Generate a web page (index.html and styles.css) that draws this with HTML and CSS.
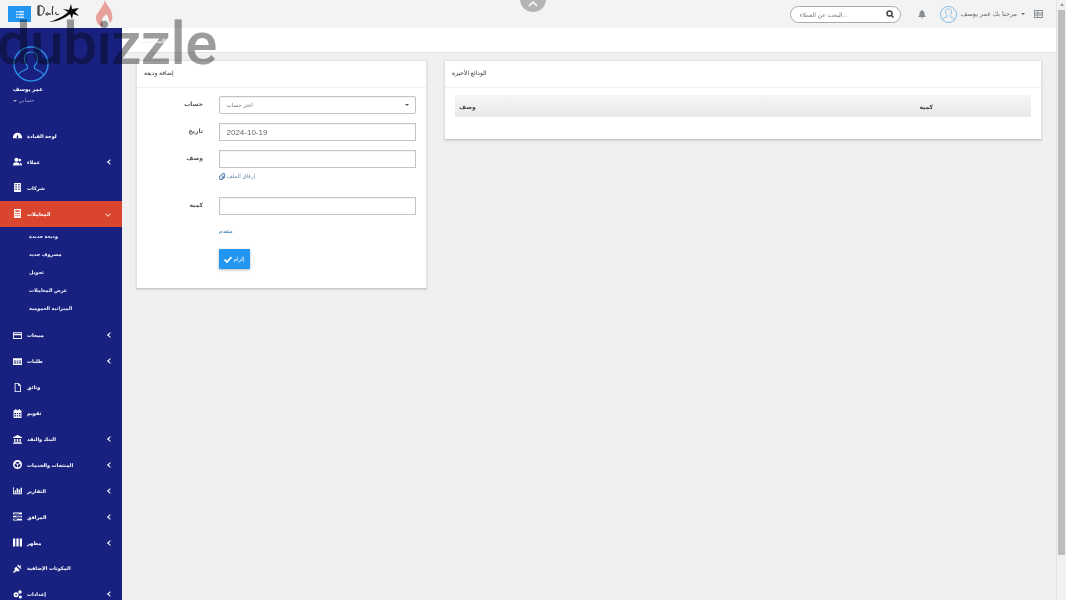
FILE: index.html
```html
<!DOCTYPE html>
<html lang="ar">

<head>
  <meta charset="UTF-8">
  <title>إضافة وديعة</title>
  <link rel="stylesheet" href="styles.css">
</head>

<body>
  <svg class="sprite" width="0" height="0">
    <symbol id="i-dash" viewBox="0 0 16 16"><path d="M8 3a8 8 0 0 0-8 8v2h16v-2a8 8 0 0 0-8-8zm0 3 1.500 4.500a1.600 1.600 0 1 1-3 0z" fill-rule="evenodd"/></symbol>
    <symbol id="i-users" viewBox="0 0 16 16"><circle cx="6" cy="5" r="3.500"/><path d="M0 15c0-4 2-5.500 6-5.500s6 1.500 6 5.500z"/><circle cx="12" cy="5.500" r="2.500"/><path d="M13 15h3c0-3-1-4.500-4-4.800 1 1.200 1 3 1 4.800z"/></symbol>
    <symbol id="i-building" viewBox="0 0 16 16"><path d="M2 0h12v16H2zm2 2v2h3V2zm5 0v2h3V2zM4 6v2h3V6zm5 0v2h3V6zm-5 4v2h3v-2zm5 0v2h3v-2z" fill-rule="evenodd"/></symbol>
    <symbol id="i-calc" viewBox="0 0 16 16"><path d="M2 0h12v16H2zm2 2v3h8V2zm0 5v2h2V7zm3 0v2h2V7zm3 0v2h2V7zm-6 4v2h2v-2zm3 0v2h2v-2zm3 0v2h2v-2z" fill-rule="evenodd"/></symbol>
    <symbol id="i-card" viewBox="0 0 16 16"><path d="M0 2h16v12H0zm1.500 1.500V5h13V3.500zm0 4V12.500h13V7.500z" fill-rule="evenodd"/></symbol>
    <symbol id="i-table" viewBox="0 0 16 16"><path d="M0 2h16v12H0zm1.500 4v2H5V6zm5 0v2h3V6zm4.500 0v2h3.500V6zm-9.500 3.500v2H5v-2zm5 0v2h3v-2zm4.500 0v2h3.500v-2z" fill-rule="evenodd"/></symbol>
    <symbol id="i-file" viewBox="0 0 16 16"><path d="M3 0h7l4 4v12H3zm1.500 1.500v13h8V5H9V1.500z" fill-rule="evenodd"/></symbol>
    <symbol id="i-cal" viewBox="0 0 16 16"><path d="M1 2h3V0h2v2h4V0h2v2h3v14H1zm1.500 5v2.500h3V7zm4.500 0v2.500h2V7zm3.500 0v2.500h3V7zm-8 4v2.500h3V11zm4.500 0v2.500h2V11zm3.500 0v2.500h3V11z" fill-rule="evenodd"/></symbol>
    <symbol id="i-bank" viewBox="0 0 16 16"><path d="M8 0l8 4v1.500H0V4zM2 7h2.500v5H2zm4.700 0h2.600v5H6.700zM11.500 7H14v5h-2.500zM1 13h14v1H1zM0 14.500h16V16H0z"/></symbol>
    <symbol id="i-cube" viewBox="0 0 16 16"><path d="M8 0a8 8 0 1 0 0 16A8 8 0 0 0 8 0zM3.500 5 8 3l4.500 2L8 7zM3 6.500l4.300 1.800v5L3 11zm10 0V11l-4.300 2.300v-5z" fill-rule="evenodd"/></symbol>
    <symbol id="i-chart" viewBox="0 0 16 16"><path d="M0 2h1.500v11H16v1.500H0zM3 8h2.500v4H3zm3.500-4H9v8H6.500zM10 6h2.500v6H10zm3.500-3H16v9h-2.500z"/></symbol>
    <symbol id="i-tasks" viewBox="0 0 16 16"><path d="M0 1h16v3H0zm1.500 1v1H10V2zM0 6.500h16v3H0zM5 7.500v1h9.500v-1zM0 12h16v3H0zm1.500 1v1H7v-1z" fill-rule="evenodd"/></symbol>
    <symbol id="i-columns" viewBox="0 0 16 16"><path d="M0 1h4v14H0zm6 0h4v14H6zm6 0h4v14h-4z"/></symbol>
    <symbol id="i-plug" viewBox="0 0 16 16"><path d="M9 1l3 3 2-2 1 1-2 2 2 3-2 .5-5.500-5.500zM6 5l6 6c-2 2.500-4.500 3-6.500 1.500L2 16 0 14l3.500-3.500C2 8.500 3 7 6 5z"/></symbol>
    <symbol id="i-cogs" viewBox="0 0 16 16"><path d="M5.500 4a4.500 4.500 0 1 0 0 9 4.500 4.500 0 0 0 0-9zm0 3a1.500 1.500 0 1 1 0 3 1.500 1.500 0 0 1 0-3z" fill-rule="evenodd"/><circle cx="12.500" cy="3.500" r="3"/><circle cx="13" cy="12.500" r="2.800"/></symbol>
    <symbol id="i-person" viewBox="0 0 36 36"><circle cx="18" cy="18" r="17" fill="none" stroke="currentColor" stroke-width="1.400"/><path d="M5.500 29c1-4 6.500-4.500 9-6.500v-2.800c-1.800-1.500-3-4.200-3-7.200 0-4 2.500-6.500 6.500-6.500s6.500 2.500 6.500 6.500c0 3-1.200 5.700-3 7.200v2.800c2.500 2 8 2.500 9 6.500" fill="none" stroke="currentColor" stroke-width="1.200"/></symbol>
  </svg>

  <div class="shell">
    <div class="screen">
      <header class="topbar">
        <div class="brand">
          <button class="menu-btn" type="button">
            <svg width="8" height="7" viewBox="0 0 10 9" fill="#d8ecfc"><path d="M0 0h2v2H0zm3 0h7v2H3zM0 3.500h2v2H0zm3 0h7v2H3zM0 7h2v2H0zm3 0h7v2H3z"/></svg>
          </button>
          <svg class="logo" width="43" height="22" viewBox="0 0 43 22">
            <path d="M1 3c4-1 7 1 6 5s-4 5-6 4zM2 3v9M11 10c-2-1-3 2-1 2s2-2 2-2 0 2 2 1M16 3c-1 3-1 7 0 9M19 9c-1 3 1 3 3 2" fill="none" stroke="#111" stroke-width="1"/>
            <path d="M12 19c7-2 15-6 19-10l-5-3 6 1 2-6 1 5 7-1-4 4 4 4-6-2-1 5-2-5c-5 4-13 8-21 8z" fill="#0a0a0a"/>
          </svg>
          <svg class="flame" width="20" height="28" viewBox="0 0 20 28">
            <path d="M10 0c1 5 6 8 7 14 1 4 0 7-2 9l-1-2c0-3-1-5-3-7-1 2-4 3-4 7 0 1 0 2 1 3 0 1-1 2-1 3-4-2-6-5-6-9 0-4 3-6 5-10 2-2 3-5 4-8z" fill="#e8a09a"/>
          </svg>
        </div>
        <div class="top-tools">
          <div class="search">
            <svg width="8" height="8" viewBox="0 0 16 16"><circle cx="7" cy="7" r="5" fill="none" stroke="#444" stroke-width="3"/><path d="M10.500 10.500 15 15" stroke="#444" stroke-width="3"/></svg>
            <span class="search-text">البحث عن العملاء...</span>
          </div>
          <svg class="bell" width="8" height="9" viewBox="0 0 16 18"><path d="M8 0c1 0 1.500.7 1.500 1.500C12 2.300 13 4.500 13 7c0 4 1 5 3 7H0c2-2 3-3 3-7 0-2.500 1-4.700 3.500-5.500C6.500.7 7 0 8 0zM6 15h4a2 2 0 0 1-4 0z" fill="#8a8f94"/></svg>
          <svg class="top-avatar" width="17" height="17"><use href="#i-person"/></svg>
          <span class="welcome">مرحبا بك عمر يوسف</span>
          <span class="caret"></span>
          <svg width="9" height="8" viewBox="0 0 16 14" fill="#8a8f94"><path d="M0 0h16v14H0zm1.500 1.500v3H6v-3zm6 0v3h7v-3zm-6 4.500v2H6V6zm6 0v2h7V6zm-6 3.500v3H6v-3zm6 0v3h7v-3z" fill-rule="evenodd"/></svg>
        </div>
      </header>

      <div class="body-row">
        <aside class="sidebar">
          <div class="profile">
            <svg class="avatar" width="36" height="36"><use href="#i-person"/></svg>
            <div class="profile-name">عمر يوسف</div>
            <div class="profile-role"><span class="caret light"></span> حسابي</div>
          </div>
          <nav class="nav">
            <a class="nav-item"><svg><use href="#i-dash"/></svg><span>لوحة القيادة</span></a>
            <a class="nav-item more"><svg><use href="#i-users"/></svg><span>عملاء</span></a>
            <a class="nav-item"><svg><use href="#i-building"/></svg><span>شركات</span></a>
            <a class="nav-item more open active"><svg><use href="#i-calc"/></svg><span>المعاملات</span></a>
            <div class="subnav">
              <a>وديعة جديدة</a>
              <a>مصروف جديد</a>
              <a>تحويل</a>
              <a>عرض المعاملات</a>
              <a>الميزانية العمومية</a>
            </div>
            <a class="nav-item more"><svg><use href="#i-card"/></svg><span>مبيعات</span></a>
            <a class="nav-item more"><svg><use href="#i-table"/></svg><span>طلبات</span></a>
            <a class="nav-item"><svg><use href="#i-file"/></svg><span>وثائق</span></a>
            <a class="nav-item"><svg><use href="#i-cal"/></svg><span>تقويم</span></a>
            <a class="nav-item more"><svg><use href="#i-bank"/></svg><span>البنك والنقد</span></a>
            <a class="nav-item more"><svg><use href="#i-cube"/></svg><span>المنتجات والخدمات</span></a>
            <a class="nav-item more"><svg><use href="#i-chart"/></svg><span>التقارير</span></a>
            <a class="nav-item more"><svg><use href="#i-tasks"/></svg><span>المرافق</span></a>
            <a class="nav-item more"><svg><use href="#i-columns"/></svg><span>مظهر</span></a>
            <a class="nav-item"><svg><use href="#i-plug"/></svg><span>المكونات الإضافية</span></a>
            <a class="nav-item more"><svg><use href="#i-cogs"/></svg><span>إعدادات</span></a>
          </nav>
        </aside>

        <main class="content">
          <div class="page-head"><span class="page-title">المعاملات</span></div>
          <div class="cards">
            <section class="card card-form">
              <h2 class="card-title">إضافة وديعة</h2>
              <form class="form">
                <div class="row">
                  <label>حساب</label>
                  <div class="field select">اختر حساب<span class="caret dark"></span></div>
                </div>
                <div class="row">
                  <label>تاريخ</label>
                  <input class="field" type="text" value="2024-10-19">
                </div>
                <div class="row row-desc">
                  <label>وصف</label>
                  <div class="col">
                    <input class="field" type="text">
                    <a class="attach">
                      <svg width="7" height="7" viewBox="0 0 16 16"><path d="M14 8 8 14a4 4 0 0 1-6-6l6-6a2.800 2.800 0 0 1 4 4L6 12" fill="none" stroke="#5f86b5" stroke-width="2.500"/></svg>
                      إرفاق الملف
                    </a>
                  </div>
                </div>
                <div class="row">
                  <label>كمية</label>
                  <input class="field" type="text">
                </div>
                <a class="advanced">متقدم</a>
                <button class="save" type="button">
                  <svg width="8" height="7" viewBox="0 0 16 14"><path d="M1 7l5 5L15 2" fill="none" stroke="#fff" stroke-width="3.500"/></svg>
                  إلزام
                </button>
              </form>
            </section>

            <section class="card card-list">
              <h2 class="card-title">الودائع الأخيرة</h2>
              <div class="table-wrap">
                <div class="table-head">
                  <span class="col-desc">وصف</span>
                  <span class="col-qty">كمية</span>
                </div>
              </div>
            </section>
          </div>
        </main>
      </div>
    </div>

    <div class="scrollbar">
      <div class="scroll-up"></div>
      <div class="scroll-thumb"></div>
    </div>
  </div>

  <div class="watermark">dubizzle</div>
  <div class="gallery-btn">
    <svg width="10" height="6" viewBox="0 0 10 6"><path d="M1 5l4-4 4 4" fill="none" stroke="#fff" stroke-width="1.500"/></svg>
  </div>
</body>

</html>
```

FILE: styles.css
```css
* {
  box-sizing: border-box;
}

html,
body {
  margin: 0;
  height: 600px;
  overflow: hidden;
}

body {
  font-family: "Liberation Sans", "DejaVu Sans", "Noto Sans", sans-serif;
  font-size: 7px;
  color: #333;
  background: #f0f0f0;
}

.sprite {
  display: none;
}

.shell {
  display: flex;
  height: 600px;
}

.screen {
  flex: 1;
  min-width: 0;
  display: flex;
  flex-direction: column;
}

/* top bar */
.topbar {
  height: 28px;
  flex: none;
  display: flex;
  justify-content: space-between;
  align-items: center;
  background: #f3f3f4;
  overflow: hidden;
}

.brand {
  display: flex;
  align-items: center;
  padding-left: 8px;
}

.menu-btn {
  width: 23px;
  height: 16px;
  padding: 0;
  border: 0;
  background: #2196f3;
  display: flex;
  align-items: center;
  justify-content: center;
}

.logo {
  margin-left: 6px;
}

.flame {
  margin-left: 15px;
}

.top-tools {
  display: flex;
  align-items: center;
  padding-right: 13px;
}

.search {
  width: 111px;
  height: 17px;
  display: flex;
  justify-content: space-between;
  align-items: center;
  flex-direction: row-reverse;
  padding: 0 6px 0 9px;
  border: 1px solid #aaa;
  border-radius: 9px;
  background: #fff;
}

.search-text {
  font-size: 6px;
  color: #777;
}

.bell {
  margin-left: 17px;
}

.top-avatar {
  margin-left: 14px;
  color: #4aa3df;
}

.welcome {
  margin-left: 4px;
  font-size: 6.500px;
  color: #666;
}

.caret {
  display: inline-block;
  border: 2px solid transparent;
  border-top: 2.500px solid #666;
  border-bottom: 0;
  margin: 0 9px 0 4px;
}

.caret.light {
  border-top-color: #aab;
  margin: 0;
  vertical-align: middle;
}

.caret.dark {
  border-top-color: #555;
  margin: 0;
}

/* side menu */
.body-row {
  flex: 1;
  min-height: 0;
  display: flex;
}

.sidebar {
  width: 122px;
  flex: none;
  background: #18217f;
  color: #fff;
  overflow: hidden;
}

.profile {
  height: 95px;
  padding: 18px 0 0 13px;
}

.avatar {
  display: block;
  margin: 0 0 3px;
  color: #2b8fe8;
}

.profile-name {
  width: 30px;
  text-align: center;
  font-size: 5.500px;
  font-weight: bold;
  line-height: 9px;
}

.profile-role {
  margin-top: 2px;
  font-size: 5.500px;
  color: #9aa0d0;
  line-height: 9px;
}

.nav-item {
  height: 25.900px;
  display: flex;
  align-items: center;
  padding-left: 13px;
  font-size: 5px;
  font-weight: bold;
  color: #fff;
}

.nav-item svg {
  width: 9px;
  height: 9px;
  margin-right: 5px;
  fill: #fff;
}

.nav-item.more::after {
  content: "";
  margin-left: auto;
  margin-right: 10px;
  width: 3px;
  height: 3px;
  border-top: 1px solid #fff;
  border-left: 1px solid #fff;
  transform: rotate(-45deg);
}

.nav-item.open::after {
  transform: rotate(225deg);
  border-color: #f3c3b8;
  margin-right: 12px;
}

.nav-item.active {
  background: #d9452f;
}

.subnav {
  display: flex;
  flex-direction: column;
  padding: 0 0 5px 29px;
}

.subnav a {
  height: 18.200px;
  display: flex;
  align-items: center;
  font-size: 5px;
  font-weight: bold;
  color: #eef;
}

/* content */
.content {
  flex: 1;
  min-width: 0;
}

.page-head {
  height: 25px;
  padding: 9px 0 0 18px;
  background: #fff;
  border-bottom: 1px solid #e6e6e6;
}

/* sits on top of the watermark */
.page-title {
  position: relative;
  z-index: 2;
  font-size: 5.500px;
  font-weight: bold;
  color: #f4f4f4;
}

.cards {
  display: flex;
  align-items: flex-start;
  gap: 17px;
  padding: 7px 14px 0;
}

.card {
  background: #fff;
  border: 1px solid #e3e3e3;
  border-bottom-color: #c8c8c8;
  box-shadow: 0 1px 2px rgba(0, 0, 0, .12);
}

.card-form {
  width: 291px;
  height: 229px;
}

.card-list {
  flex: 1;
  height: 80px;
}

.card-title {
  height: 27px;
  margin: 0;
  padding: 7px 7px 0;
  font-size: 6px;
  font-weight: normal;
  line-height: 10px;
  border-bottom: 1px solid #f0f0f0;
}

.form {
  padding: 8px 10px 0 0;
}

.row {
  display: flex;
  align-items: flex-start;
  margin-bottom: 9px;
}

.row-desc {
  margin-bottom: 17px;
}

.row label {
  width: 66px;
  padding-top: 4px;
  margin-right: 16px;
  text-align: right;
  font-size: 6px;
  font-weight: bold;
  color: #555;
}

.col {
  display: flex;
  flex-direction: column;
}

.field {
  width: 197px;
  height: 18px;
  padding: 0 6.500px;
  border: 1px solid #c4c4c4;
  background: #fff;
  font-family: inherit;
  font-size: 8px;
  color: #666;
  box-shadow: inset 0 1px 1px rgba(0, 0, 0, .04);
}

.select {
  display: flex;
  justify-content: space-between;
  align-items: center;
  font-size: 5.500px;
  color: #777;
  border-radius: 2px;
}

.attach {
  display: flex;
  align-items: center;
  gap: 1px;
  margin-top: 4px;
  font-size: 5.500px;
  line-height: 8px;
  color: #6f8fb5;
}

.advanced {
  display: block;
  margin: 12px 0 0 82px;
  font-size: 5.500px;
  line-height: 9px;
  color: #1f6fa8;
}

.save {
  display: flex;
  align-items: center;
  justify-content: center;
  gap: 1px;
  width: 31px;
  height: 20px;
  margin: 13px 0 0 82px;
  padding: 0;
  border: 0;
  border-radius: 1px;
  background: #2196f3;
  box-shadow: 0 1px 3px rgba(0, 0, 0, .3);
  color: #fff;
  font-family: inherit;
  font-size: 5.500px;
}

.table-wrap {
  padding: 7px 10px;
}

.table-head {
  height: 22px;
  display: flex;
  justify-content: space-between;
  align-items: center;
  padding: 0 98px 0 4px;
  background: linear-gradient(#f6f6f7, #e9e9ec);
  font-size: 6px;
  font-weight: bold;
  color: #444;
}

/* fake page scrollbar */
.scrollbar {
  width: 10px;
  flex: none;
  background: #f1f1f1;
  border-left: 1px solid #e4e4e4;
  padding: 10px 1px 0;
  position: relative;
}

.scroll-up {
  position: absolute;
  top: 3px;
  left: 2.500px;
  border: 2px solid transparent;
  border-bottom: 3px solid #9a9a9a;
  border-top: 0;
}

.scroll-thumb {
  height: 545px;
  background: #bdbdbd;
}

/* over everything */
.watermark {
  position: absolute;
  z-index: 1;
  left: -3px;
  top: 8px;
  font-family: Roboto, "Noto Sans", sans-serif;
  font-weight: 500;
  font-size: 60px;
  line-height: 72px;
  letter-spacing: -.5px;
  color: #9c9c9c;
  mix-blend-mode: multiply;
}

.gallery-btn {
  position: absolute;
  left: 520px;
  top: -14px;
  width: 26px;
  height: 26px;
  padding-top: 15px;
  border-radius: 50%;
  background: #b4b4b4;
  display: flex;
  justify-content: center;
  align-items: flex-start;
}
```
